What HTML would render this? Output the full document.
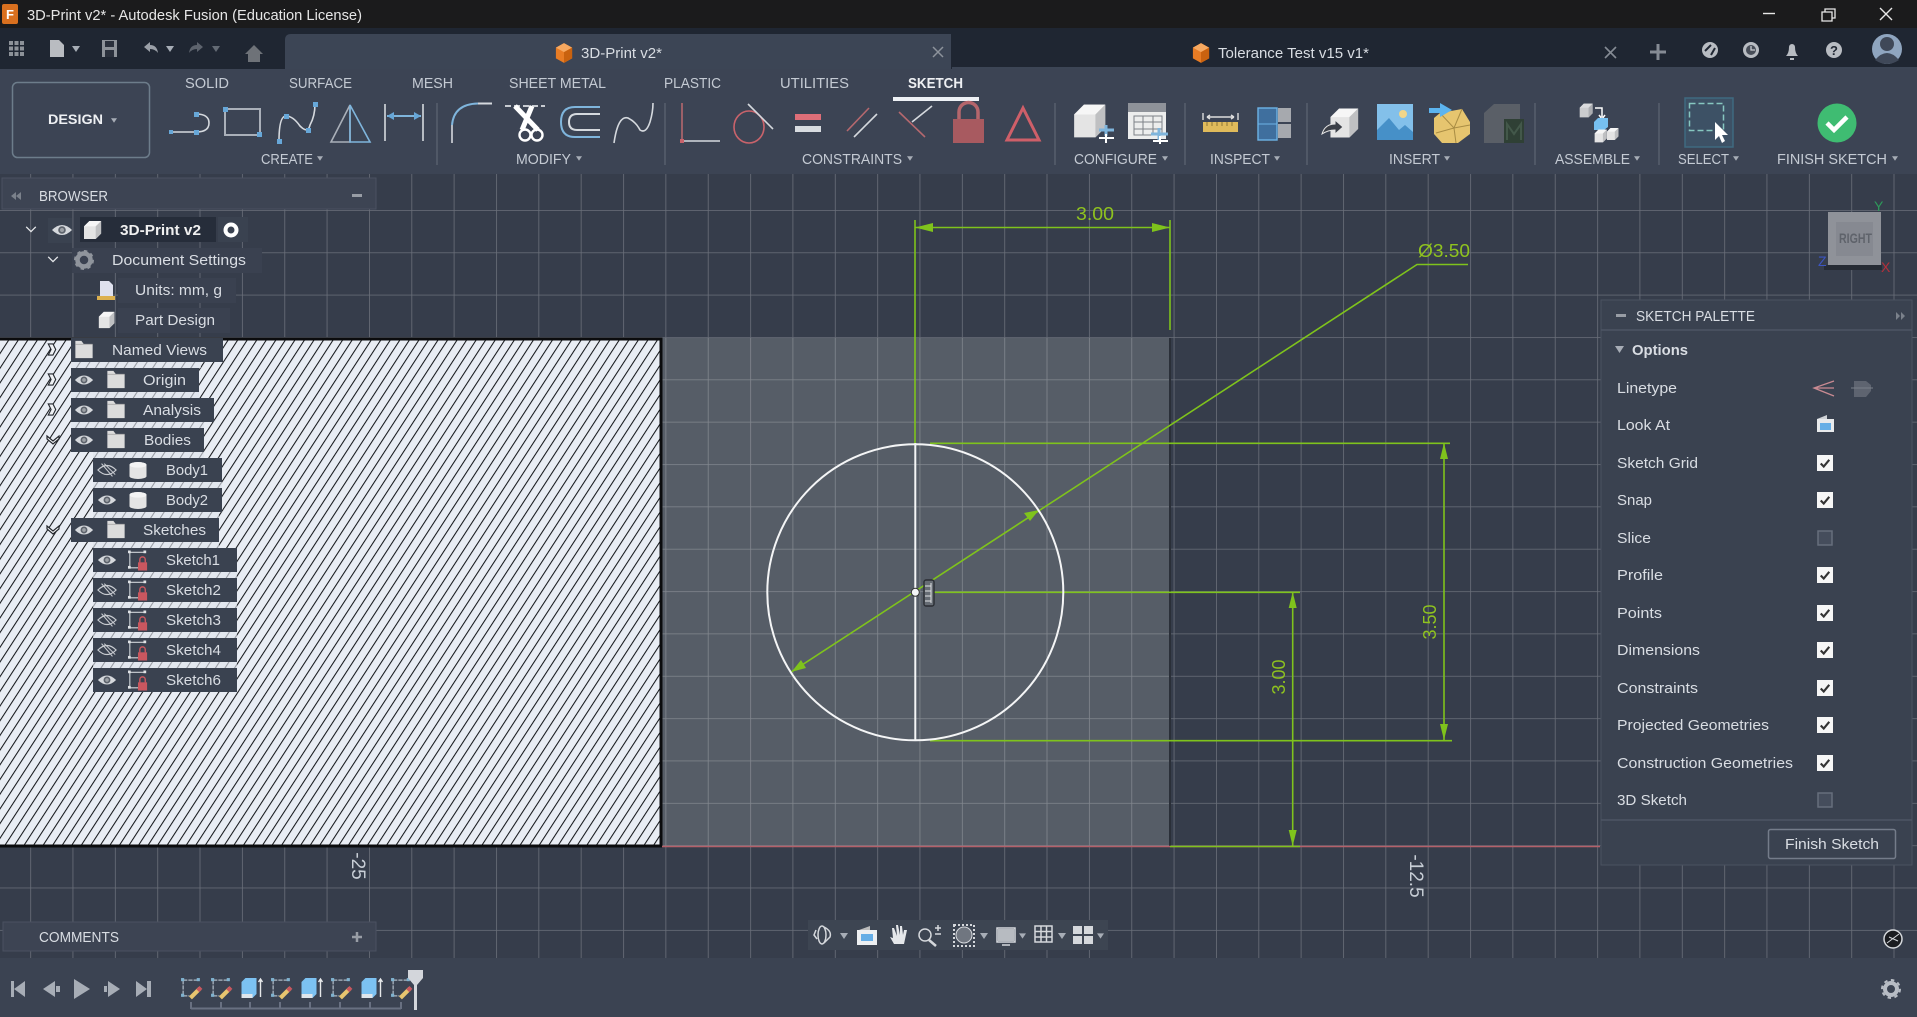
<!DOCTYPE html>
<html><head><meta charset="utf-8"><title>3D-Print v2* - Autodesk Fusion</title>
<style>
html,body{margin:0;padding:0;background:#363d4b;width:1917px;height:1017px;overflow:hidden}
svg{display:block}
text{font-family:"Liberation Sans",sans-serif;fill:#d9dde3}
.m{font-size:14.5px}
.u{font-size:14.5px;fill:#c4cad3}
.b{font-weight:bold;fill:#eef0f3}
.d{font-size:18px;fill:#8fc31f}
</style></head><body>
<svg width="1917" height="1017" viewBox="0 0 1917 1017" xmlns="http://www.w3.org/2000/svg">
<defs>
<pattern id="grid" x="30.2" y="210" width="42.35" height="42.35" patternUnits="userSpaceOnUse">
<path d="M0 0V42.35M0 0H42.35" stroke="#fff" stroke-opacity=".26" stroke-width="1.6" fill="none"/>
</pattern>
<pattern id="hatch" width="8" height="8" patternUnits="userSpaceOnUse" patternTransform="rotate(33)">
<rect width="8" height="8" fill="#e9edf4"/><rect width="1.05" height="8" fill="#15171b"/>
</pattern>
<symbol id="eye" viewBox="0 0 22 14" overflow="visible"><path d="M1 7Q11-3 21 7Q11 17 1 7Z" fill="#d5d8dc"/><circle cx="11" cy="7" r="3.8" fill="#5d636c"/><circle cx="11" cy="7" r="2" fill="#9da1a6"/></symbol>
<symbol id="eyeoff" viewBox="0 0 22 14" overflow="visible"><path d="M1 7Q11-3 21 7Q11 17 1 7Z" fill="none" stroke="#c9ccd1" stroke-width="1.3"/><path d="M5 0L17 14M8 0L20 12" stroke="#c9ccd1" stroke-width="1.1"/></symbol>
<symbol id="folder" viewBox="0 0 22 22" overflow="visible"><path d="M1 1H8L11 5H21V21H1Z" fill="#dcdcdc"/><path d="M1 5H21" stroke="#aaa"/></symbol>
<symbol id="sk" viewBox="0 0 22 22" overflow="visible"><path d="M2 2H19M2 2V19H11" fill="none" stroke="#cfd3d8" stroke-width="1.2"/><g fill="#e0e3e6"><rect x="0" y="0" width="3" height="3"/><rect x="17" y="0" width="3" height="3"/><rect x="0" y="17" width="3" height="3"/></g><rect x="11" y="13" width="10" height="9" fill="#c9575f"/><path d="M13 13V10A3 3 0 0 1 19 10V13" fill="none" stroke="#c9575f" stroke-width="1.6"/></symbol>
<symbol id="chk" viewBox="0 0 15 15"><rect width="15" height="15" fill="#f6f6f6"/><path d="M3.5 8L6.3 10.8L11.5 4.5" fill="none" stroke="#333" stroke-width="2"/></symbol>
<symbol id="cube" viewBox="0 0 20 22" overflow="visible"><path d="M0 7L6 1H19V15L13 21H0Z" fill="#e4e4e4"/><path d="M13 7H0L6 1H19Z" fill="#f6f6f6"/><path d="M13 7L19 1V15L13 21Z" fill="#bfc0c2"/></symbol>
<symbol id="cyl" viewBox="0 0 18 18" overflow="visible"><path d="M0 3A9 3 0 0 1 18 3V15A9 3 0 0 1 0 15Z" fill="#e4e4e4"/><ellipse cx="9" cy="3" rx="9" ry="3" fill="#f4f4f4"/></symbol>
<symbol id="ch" viewBox="0 0 14 10" overflow="visible"><path d="M1 1L7 7L13 1" fill="none" stroke="#e5e7ea" stroke-width="1.6"/></symbol>
<symbol id="chd" viewBox="0 0 14 10" overflow="visible"><path d="M1 1L7 6L13 1L13 4L7 9L1 4Z" fill="#eef0f3" stroke="#23262c" stroke-width="1.2"/></symbol>
<symbol id="ch2" viewBox="0 0 10 14" overflow="visible"><path d="M1 1L6 1L9 7L6 13L1 13L4 7Z" fill="#eef0f3" stroke="#23262c" stroke-width="1.2"/></symbol>
<symbol id="ar" viewBox="0 0 8 6"><path d="M0 0H8L4 6Z" fill="#a7adb6"/></symbol>
<symbol id="orange" viewBox="0 0 20 22"><path d="M10 0L19 5V17L10 22L1 17V5Z" fill="#e87c24"/><path d="M1 5L10 10L19 5L10 0Z" fill="#f6a860"/><path d="M10 10L19 5V17L10 22Z" fill="#c9620f"/></symbol>
<symbol id="skt" viewBox="0 0 22 22" overflow="visible"><path d="M3 3H18M3 3V18H9" fill="none" stroke="#aeb9c4" stroke-width="1.2" stroke-dasharray="4 1"/><g fill="#7fb2cf"><rect x="1" y="1" width="3" height="3"/><rect x="16" y="1" width="3" height="3"/><rect x="1" y="16" width="3" height="3"/></g><path d="M10 20L19 11" stroke="#e7c56f" stroke-width="4"/><path d="M17 13L20 10" stroke="#c9575f" stroke-width="4"/></symbol>
<symbol id="blu" viewBox="0 0 22 22" overflow="visible"><path d="M1 5L5 1H16V17L12 21H1Z" fill="#7cc2f2"/><path d="M1 17H12V21H1Z" fill="#dfe6ec"/><path d="M20 20V3M18 5L20 2L22 5" fill="none" stroke="#e6e8ea" stroke-width="1.4"/></symbol>
</defs>

<!-- canvas -->
<rect width="1917" height="1017" fill="#363d4b"/>
<rect x="662" y="338" width="508" height="509" fill="#565d67"/>
<rect x="0" y="174" width="1917" height="784" fill="url(#grid)"/>
<rect x="0" y="338" width="662" height="509" fill="url(#hatch)"/>
<path d="M-2 339H661V846H-2" fill="none" stroke="#0b0c0e" stroke-width="3"/>
<path d="M1170 338V847" stroke="#2a2f38" stroke-width="2"/>
<path d="M662 846.5H1600" stroke="#b5606a" stroke-width="1.4"/>

<!-- sketch dims -->
<g stroke="#7fc31c" stroke-width="1.6" fill="none">
<path d="M915 220V443M1170 220V330M915 227.5H1170"/>
<path d="M930 443.3H1450M930 592.3H1300M930 740.7H1452M1170 846.5H1300"/>
<path d="M1444 443V740M1292.7 592V846"/>
<path d="M791.7 671.7L1417 264.5H1468"/>
</g>
<g fill="#7fc31c">
<path d="M915 227.5L933 223V232ZM1170 227.5L1152 223V232Z"/>
<path d="M1444 443L1440 459H1448ZM1444 740L1440 724H1448ZM1292.7 592L1288.7 608H1296.7ZM1292.7 846L1288.7 830H1296.7Z"/>
<path d="M1039 510L1024 513L1030 521ZM791.7 671.7L806 668L801 660Z"/>
</g>
<text class="d" x="1076" y="220" textLength="38" lengthAdjust="spacingAndGlyphs">3.00</text>
<text class="d" x="1418" y="257" textLength="52" lengthAdjust="spacingAndGlyphs">Ø3.50</text>
<text class="d" transform="translate(1436,622) rotate(-90)" text-anchor="middle">3.50</text>
<text class="d" transform="translate(1285,677) rotate(-90)" text-anchor="middle">3.00</text>
<text transform="translate(1410,876) rotate(90)" text-anchor="middle" style="font-size:19px;fill:#c8ced6">-12.5</text>
<text transform="translate(352,866) rotate(90)" text-anchor="middle" style="font-size:19px;fill:#c8ced6">-25</text>
<circle cx="915.3" cy="592.3" r="148" fill="none" stroke="#f4f5f6" stroke-width="2"/>
<path d="M915.3 443V740" stroke="#f4f5f6" stroke-width="2"/>
<circle cx="915.3" cy="592.3" r="4" fill="#f4f5f6" stroke="#333" stroke-width="1"/>
<rect x="924" y="580" width="10" height="26" rx="2" fill="#666c74" stroke="#2a2d33" stroke-width="1.4"/>
<path d="M931 583V603M925 586H931M925 591H931M925 596H931M925 601H931" stroke="#e0e2e4" stroke-width="1"/>

<!-- view cube -->
<rect x="1828" y="212" width="53" height="53" fill="#8f9299"/>
<rect x="1836" y="222" width="37" height="34" fill="#868991"/>
<rect x="1824" y="265" width="58" height="5" fill="#262b34"/>
<text x="1839" y="243" textLength="33" lengthAdjust="spacingAndGlyphs" style="font-size:14px;fill:#5f636b;font-weight:bold">RIGHT</text>
<text x="1874" y="211" style="font-size:14px;fill:#2e9a5a">Y</text>
<text x="1818" y="266" style="font-size:14px;fill:#3c55c0">Z</text>
<text x="1881" y="272" style="font-size:14px;fill:#b5303a">X</text>

<!-- title bar -->
<rect width="1917" height="28" fill="#1b1b1c"/>
<rect x="2" y="4" width="16" height="20" rx="2" fill="#d9701f"/><text x="6" y="19" style="font-size:13px;fill:#fff;font-weight:bold">F</text>
<text x="27" y="20" textLength="335" lengthAdjust="spacingAndGlyphs" style="font-size:15px;fill:#e6e6e6">3D-Print v2* - Autodesk Fusion (Education License)</text>
<path d="M1763 13.5H1775" stroke="#e8e8e8" stroke-width="1.4"/>
<path d="M1822 12H1832V21H1822ZM1825 12V9H1835V18H1832" fill="none" stroke="#e8e8e8" stroke-width="1.3"/>
<path d="M1880 8L1892 20M1892 8L1880 20" stroke="#e8e8e8" stroke-width="1.4"/>

<!-- tab row -->
<rect y="28" width="1917" height="41" fill="#1f2632"/>
<path d="M285 69V40Q285 34 291 34H951V69Z" fill="#3c4555"/>
<path d="M952 68H1917" stroke="#3c4555" stroke-width="2"/>
<g fill="#8d9299">
<path d="M9 41h4v4h-4zM14.500 41h4v4h-4zM20 41h4v4h-4zM9 46.500h4v4h-4zM14.500 46.500h4v4h-4zM20 46.500h4v4h-4zM9 52h4v4h-4zM14.500 52h4v4h-4zM20 52h4v4h-4z"/>
</g>
<path d="M50 40H59L64 45V57H50Z" fill="#b9bcc1"/>
<use href="#ar" x="72" y="46" width="8" height="6"/>
<path d="M102 40H117V57H102Z" fill="#8d9299"/><rect x="105" y="41" width="9" height="6" fill="#2a303c"/><rect x="105" y="50" width="9" height="7" fill="#2a303c"/>
<path d="M144 47L150 42V45Q157 45 158 53Q155 49 150 49V52Z" fill="#9a9fa7"/>
<use href="#ar" x="166" y="46" width="8" height="6"/>
<path d="M203 47L197 42V45Q190 45 189 53Q192 49 197 49V52Z" fill="#5d636d"/>
<use href="#ar" x="212" y="46" width="8" height="6" opacity=".5"/>
<path d="M245 54L254 45L263 54H260V62H248V54Z" fill="#6e7278"/>
<use href="#orange" x="555" y="43" width="18" height="20"/>
<text x="581" y="58" textLength="81" lengthAdjust="spacingAndGlyphs" style="font-size:15px">3D-Print v2*</text>
<path d="M933 47L943 57M943 47L933 57" stroke="#8d939c" stroke-width="1.5"/>
<use href="#orange" x="1192" y="43" width="18" height="20"/>
<text x="1218" y="58" textLength="151" lengthAdjust="spacingAndGlyphs" style="font-size:15px">Tolerance Test v15 v1*</text>
<path d="M1605 47L1616 58M1616 47L1605 58" stroke="#858b94" stroke-width="1.6"/>
<path d="M1658 44V60M1650 52H1666" stroke="#858b94" stroke-width="3"/>
<circle cx="1710" cy="50" r="8" fill="#b8bcc2"/><path d="M1705 51L1711 45M1711 55L1715 48" stroke="#1f2632" stroke-width="2"/>
<circle cx="1751" cy="50" r="8" fill="#b8bcc2"/><circle cx="1751" cy="50" r="5" fill="#474d58"/><path d="M1751 46V50H1755" stroke="#c8cbd0" fill="none" stroke-width="1.3"/>
<path d="M1786 56Q1789 53 1789 47A3 3 0 0 1 1795 47Q1795 53 1798 56ZM1790 58H1794V60H1790Z" fill="#b8bcc2"/>
<circle cx="1834" cy="50" r="8" fill="#b8bcc2"/><text x="1830" y="55" style="font-size:13px;fill:#1f2632;font-weight:bold">?</text>
<ellipse cx="1887" cy="49" rx="15" ry="15" fill="#8fa5bf"/><circle cx="1887" cy="44" r="7" fill="#3f4858"/><path d="M1875 60Q1887 46 1899 60Q1887 68 1875 60Z" fill="#3f4858"/>

<!-- toolbar -->
<rect y="69" width="1917" height="105" fill="#3c4454"/>
<rect x="12.500" y="82.500" width="137" height="75" rx="5" fill="none" stroke="#6d7d8b" stroke-width="1.5"/>
<text x="48" y="124" textLength="55" lengthAdjust="spacingAndGlyphs" class="b" style="font-size:14px">DESIGN</text>
<use href="#ar" x="111" y="118" width="6" height="5"/>
<text class="u" x="185" y="88" textLength="44" lengthAdjust="spacingAndGlyphs">SOLID</text>
<text class="u" x="289" y="88" textLength="63" lengthAdjust="spacingAndGlyphs">SURFACE</text>
<text class="u" x="412" y="88" textLength="41" lengthAdjust="spacingAndGlyphs">MESH</text>
<text class="u" x="509" y="88" textLength="97" lengthAdjust="spacingAndGlyphs">SHEET METAL</text>
<text class="u" x="664" y="88" textLength="57" lengthAdjust="spacingAndGlyphs">PLASTIC</text>
<text class="u" x="780" y="88" textLength="69" lengthAdjust="spacingAndGlyphs">UTILITIES</text>
<text x="908" y="88" textLength="55" lengthAdjust="spacingAndGlyphs" class="b" style="font-size:14.5px">SKETCH</text>
<rect x="893" y="97" width="86" height="4" fill="#eef1f5"/>
<text class="u" x="261" y="164" textLength="52" lengthAdjust="spacingAndGlyphs">CREATE</text><use href="#ar" x="317" y="156" width="6" height="5"/>
<text class="u" x="516" y="164" textLength="55" lengthAdjust="spacingAndGlyphs">MODIFY</text><use href="#ar" x="576" y="156" width="6" height="5"/>
<text class="u" x="802" y="164" textLength="100" lengthAdjust="spacingAndGlyphs">CONSTRAINTS</text><use href="#ar" x="907" y="156" width="6" height="5"/>
<text class="u" x="1074" y="164" textLength="83" lengthAdjust="spacingAndGlyphs">CONFIGURE</text><use href="#ar" x="1162" y="156" width="6" height="5"/>
<text class="u" x="1210" y="164" textLength="60" lengthAdjust="spacingAndGlyphs">INSPECT</text><use href="#ar" x="1274" y="156" width="6" height="5"/>
<text class="u" x="1389" y="164" textLength="51" lengthAdjust="spacingAndGlyphs">INSERT</text><use href="#ar" x="1444" y="156" width="6" height="5"/>
<text class="u" x="1555" y="164" textLength="75" lengthAdjust="spacingAndGlyphs">ASSEMBLE</text><use href="#ar" x="1634" y="156" width="6" height="5"/>
<text class="u" x="1678" y="164" textLength="51" lengthAdjust="spacingAndGlyphs">SELECT</text><use href="#ar" x="1733" y="156" width="6" height="5"/>
<text class="u" x="1777" y="164" textLength="110" lengthAdjust="spacingAndGlyphs">FINISH SKETCH</text><use href="#ar" x="1892" y="156" width="6" height="5"/>
<path d="M437 103V165M665 103V165M1055 103V165M1185 103V165M1307 103V165M1535 103V165M1659 103V165" stroke="#59616f" stroke-width="1.4"/>

<!-- create icons -->
<g fill="none" stroke-width="1.6">
<path d="M171 132H196" stroke="#d5d9de"/><path d="M196 114Q209 114 209 123Q209 132 196 132" stroke="#d5d9de"/>
<path d="M225 109H260V135H225Z" stroke="#aab0b9" stroke-width="2"/>
<path d="M279 141Q279 116 286 116Q293 116 300 126Q308 134 310 125Q315 116 315 104" stroke="#d5d9de"/>
<path d="M350 105L331 142H350Z" stroke="#aab0b9"/><path d="M350 105L370 142H350Z" stroke="#7fb5dc"/>
<path d="M385 104V141M423 104V141" stroke="#d5d9de"/><path d="M387 116H421" stroke="#7fb5dc" stroke-width="2"/>
<path d="M452 143V125" stroke="#d5d9de"/><path d="M452 125Q454 104 478 103.500" stroke="#7fb5dc" stroke-width="2"/><path d="M478 103.500H492" stroke="#d5d9de" stroke-width="2"/>
<path d="M505 106H545" stroke="#c7cbd1" stroke-dasharray="6 3" stroke-width="2"/>
<path d="M600 107H575Q561 107 561 122Q561 137 575 137H600" stroke="#7fb5dc" stroke-width="2"/><path d="M600 114H577Q569 114 569 122Q569 130 577 130H600" stroke="#d5d9de" stroke-width="2"/>
<path d="M614 143Q618 115 628 118Q636 122 640 130Q646 134 650 122Q653 112 653 103" stroke="#d5d9de"/>
</g>
<path d="M515 106L538 130M532 106L522 130" stroke="#fff" stroke-width="5" fill="none"/>
<circle cx="525" cy="135" r="5.500" fill="none" stroke="#fff" stroke-width="2.400"/><circle cx="537" cy="135" r="5.500" fill="none" stroke="#fff" stroke-width="2.400"/>
<g fill="#67a7d8"><rect x="169" y="130" width="4" height="4"/><rect x="194" y="112" width="5" height="5"/><rect x="194" y="130" width="5" height="5"/><rect x="223" y="107" width="5" height="5"/><rect x="257" y="132" width="5" height="5"/><rect x="277" y="139" width="5" height="5"/><rect x="284" y="114" width="5" height="5"/><rect x="306" y="128" width="5" height="5"/><rect x="313" y="102" width="5" height="5"/><path d="M387 116L394 112V120ZM421 116L414 112V120Z"/></g>

<!-- constraints icons -->
<g fill="none" stroke-width="1.6">
<path d="M682 103V141" stroke="#b5686e"/><path d="M684 141H720" stroke="#d5d9de"/>
<ellipse cx="749" cy="127" rx="15" ry="16" stroke="#c9636b"/><path d="M748 104L773 129" stroke="#d5d9de"/>
<path d="M847 131L869 108" stroke="#b5686e"/><path d="M854 137L877 114" stroke="#d5d9de"/>
<path d="M899 112L925 137" stroke="#b5686e"/><path d="M912 122L932 106" stroke="#d5d9de"/>
<path d="M1023 108L1039 140H1007Z" stroke="#cf5f69" stroke-width="3"/>
<path d="M959 120V112A9.500 9.500 0 0 1 978 112V120" stroke="#b5666c" stroke-width="3.500"/>
</g>
<rect x="680" y="139" width="4" height="4" fill="#c9636b"/>
<rect x="795" y="114" width="26" height="6" fill="#de6e78"/><rect x="795" y="126" width="26" height="6" fill="#d8dce0"/>
<rect x="953" y="119" width="31" height="24" fill="#a85a60"/>

<!-- configure/inspect -->
<use href="#cube" x="1074" y="103" width="33" height="36"/>
<path d="M1099 130H1114M1106 125V136" stroke="#7fb5dc" stroke-width="3"/><path d="M1099 138H1114M1106 134V143" stroke="#fff" stroke-width="2"/>
<rect x="1128" y="103" width="38" height="36" fill="#eceded"/><rect x="1128" y="103" width="38" height="9" fill="#8e9299"/>
<path d="M1134 116H1162V135H1134ZM1134 122H1162M1134 129H1162M1143 116V135M1153 116V135" stroke="#7d8188" fill="none"/>
<path d="M1151 134H1168M1159 128V140" stroke="#7fb5dc" stroke-width="3"/><path d="M1153 141H1168M1160 136V144" stroke="#fff" stroke-width="2"/>
<rect x="1203" y="122" width="35" height="10" fill="#e0bb5b"/><path d="M1207 117H1234M1203 113V120M1238 113V120M1207 117L1210 115M1207 117L1210 119M1234 117L1231 115M1234 117L1231 119" stroke="#ddd" fill="none" stroke-width="1.400"/><path d="M1207 122V126M1212 122V126M1217 122V126M1222 122V126M1227 122V126M1232 122V126" stroke="#8d7434"/>
<rect x="1258" y="108" width="19" height="32" fill="#3f6f9e" stroke="#6db3e6" stroke-width="1.400"/><path d="M1278 108H1291V122H1278ZM1278 124H1291V138H1278Z" fill="#a6a9ae"/><path d="M1258 124H1277" stroke="#6db3e6"/>

<!-- insert -->
<use href="#cube" x="1330" y="107" width="30" height="32"/>
<path d="M1322 134Q1325 124 1335 124V120L1343 127L1335 134V130Q1328 130 1322 134Z" fill="#3b3f47" stroke="#e4e4e4"/>
<rect x="1377" y="104" width="36" height="36" fill="#83c0ea"/><circle cx="1403" cy="114" r="4" fill="#f2d68a"/><path d="M1377 140V130L1389 118L1399 130L1405 125L1413 132V140Z" fill="#4690c8"/>
<path d="M1440 113L1462 109L1470 122V134L1458 143H1442L1434 134V118Z" fill="#e6c56f"/><path d="M1440 113L1454 128L1436 133M1454 128L1462 109M1454 128L1470 125M1454 128L1456 143" stroke="#a98d44" fill="none"/>
<path d="M1429 108H1440V103L1452 110L1440 117V113H1429Z" fill="#5cb4ef"/>
<path d="M1484 113L1494 104H1520V143H1484Z" fill="#5a5f67"/><rect x="1504" y="119" width="20" height="24" fill="#2f4035"/><path d="M1507 140V124L1514 134L1521 124V140" stroke="#43584a" fill="none" stroke-width="2"/>

<!-- assemble -->
<use href="#cube" x="1579" y="103" width="15" height="15" opacity=".85"/>
<path d="M1595 108H1602V117M1599 115L1602 119L1605 115" stroke="#fff" fill="none" stroke-width="1.500"/>
<path d="M1594 122L1598 118H1608V127L1604 130H1594Z" fill="#77c0f0"/>
<use href="#cube" x="1594" y="129" width="14" height="14"/><use href="#cube" x="1607" y="126" width="12" height="16"/>

<!-- select -->
<rect x="1685" y="98" width="48" height="49" fill="#3d5165" stroke="#3f6a80" stroke-width="1.500"/>
<rect x="1689.500" y="103.500" width="34" height="27" fill="none" stroke="#86c7c0" stroke-width="1.500" stroke-dasharray="6 3"/>
<path d="M1715 122V140L1719 136L1722 143L1725 141L1722 135H1728Z" fill="#fff"/>
<circle cx="1837" cy="123" r="19.500" fill="#3fbc72"/><path d="M1827 123L1834 130L1847 117" fill="none" stroke="#fff" stroke-width="4.500"/>

<!-- browser panel -->
<rect x="2" y="178" width="374" height="31" fill="#3d4453" stroke="#4a5160"/>
<path d="M16 192L11 196L16 200ZM21 192L16 196L21 200Z" fill="#7b818b"/>
<text x="39" y="201" textLength="69" lengthAdjust="spacingAndGlyphs" style="font-size:14.500px">BROWSER</text>
<rect x="352" y="194" width="10" height="3" fill="#989da5"/>

<!-- browser rows -->
<path d="M71 362h130v6h-130zM71 392h128v6h-128zM71 422h133v6h-133zM93 452h111v6h-111zM93 482h129v6h-129zM93 512h126v6h-126zM93 542h126v6h-126zM93 572h144v6h-144zM93 602h144v6h-144zM93 632h144v6h-144zM93 662h144v6h-144z" fill="#dfe3ec" opacity=".65"/>
<use href="#ch" x="25" y="226" width="12" height="8"/>
<rect x="48" y="218" width="24" height="25" fill="#3a4250"/><use href="#eye" x="51" y="223" width="22" height="14"/>
<rect x="80" y="217" width="136" height="25" fill="#262d3a"/><use href="#cube" x="84" y="220" width="18" height="20"/>
<text x="120" y="235" textLength="81" lengthAdjust="spacingAndGlyphs" style="font-size:15px;font-weight:bold;fill:#f0f0f0">3D-Print v2</text>
<rect x="218" y="217" width="30" height="25" fill="#3a4250"/><circle cx="231" cy="230" r="5.500" fill="none" stroke="#fff" stroke-width="4"/>

<use href="#ch" x="47" y="256" width="12" height="8"/>
<rect x="72" y="248" width="190" height="25" fill="#3a4150"/>
<circle cx="84" cy="260" r="6.500" fill="none" stroke="#8f949c" stroke-width="4.500"/><circle cx="84" cy="260" r="9" fill="none" stroke="#8f949c" stroke-width="2" stroke-dasharray="3.500 3.500"/>
<text class="m" x="112" y="265" textLength="134" lengthAdjust="spacingAndGlyphs">Document Settings</text>

<rect x="118" y="278" width="118" height="25" fill="#3a4150"/>
<path d="M100 281H109L113 285V296H100Z" fill="#dfe1ee"/><rect x="97" y="296" width="18" height="4" fill="#dcb04f"/>
<text class="m" x="135" y="295" textLength="87" lengthAdjust="spacingAndGlyphs">Units: mm, g</text>

<rect x="118" y="308" width="112" height="25" fill="#3a4150"/>
<use href="#cube" x="98" y="311" width="18" height="18"/>
<text class="m" x="135" y="325" textLength="80" lengthAdjust="spacingAndGlyphs">Part Design</text>

<use href="#ch2" x="47" y="343" width="10" height="13"/>
<rect x="71" y="338" width="152" height="24" fill="#3a4250"/><use href="#folder" x="74" y="340" width="20" height="19"/>
<text class="m" x="112" y="355" textLength="95" lengthAdjust="spacingAndGlyphs">Named Views</text>

<use href="#ch2" x="47" y="373" width="10" height="13"/>
<rect x="71" y="368" width="128" height="24" fill="#3a4250"/><use href="#eye" x="74" y="373" width="20" height="14"/><use href="#folder" x="106" y="370" width="20" height="19"/>
<text class="m" x="143" y="385" textLength="43" lengthAdjust="spacingAndGlyphs">Origin</text>

<use href="#ch2" x="47" y="403" width="10" height="13"/>
<rect x="71" y="398" width="143" height="24" fill="#3a4250"/><use href="#eye" x="74" y="403" width="20" height="14"/><use href="#folder" x="106" y="400" width="20" height="19"/>
<text class="m" x="143" y="415" textLength="58" lengthAdjust="spacingAndGlyphs">Analysis</text>

<use href="#chd" x="46" y="435" width="14" height="10"/>
<rect x="71" y="428" width="133" height="24" fill="#3a4250"/><use href="#eye" x="74" y="433" width="20" height="14"/><use href="#folder" x="106" y="430" width="20" height="19"/>
<text class="m" x="144" y="445" textLength="47" lengthAdjust="spacingAndGlyphs">Bodies</text>

<rect x="93" y="458" width="129" height="24" fill="#3a4250"/><use href="#eyeoff" x="97" y="463" width="20" height="14"/><use href="#cyl" x="129" y="462" width="18" height="17"/>
<text class="m" x="166" y="475" textLength="42" lengthAdjust="spacingAndGlyphs">Body1</text>

<rect x="93" y="488" width="129" height="24" fill="#3a4250"/><use href="#eye" x="97" y="493" width="20" height="14"/><use href="#cyl" x="129" y="492" width="18" height="17"/>
<text class="m" x="166" y="505" textLength="42" lengthAdjust="spacingAndGlyphs">Body2</text>

<use href="#chd" x="46" y="525" width="14" height="10"/>
<rect x="71" y="518" width="148" height="24" fill="#3a4250"/><use href="#eye" x="74" y="523" width="20" height="14"/><use href="#folder" x="106" y="520" width="20" height="19"/>
<text class="m" x="143" y="535" textLength="63" lengthAdjust="spacingAndGlyphs">Sketches</text>

<rect x="93" y="548" width="144" height="24" fill="#3a4250"/><use href="#eye" x="97" y="553" width="20" height="14"/><use href="#sk" x="128" y="550" width="20" height="21"/>
<text class="m" x="166" y="565" textLength="54" lengthAdjust="spacingAndGlyphs">Sketch1</text>

<rect x="93" y="578" width="144" height="24" fill="#3a4250"/><use href="#eyeoff" x="97" y="583" width="20" height="14"/><use href="#sk" x="128" y="580" width="20" height="21"/>
<text class="m" x="166" y="595" textLength="55" lengthAdjust="spacingAndGlyphs">Sketch2</text>

<rect x="93" y="608" width="144" height="24" fill="#3a4250"/><use href="#eyeoff" x="97" y="613" width="20" height="14"/><use href="#sk" x="128" y="610" width="20" height="21"/>
<text class="m" x="166" y="625" textLength="55" lengthAdjust="spacingAndGlyphs">Sketch3</text>

<rect x="93" y="638" width="144" height="24" fill="#3a4250"/><use href="#eyeoff" x="97" y="643" width="20" height="14"/><use href="#sk" x="128" y="640" width="20" height="21"/>
<text class="m" x="166" y="655" textLength="55" lengthAdjust="spacingAndGlyphs">Sketch4</text>

<rect x="93" y="668" width="144" height="24" fill="#3a4250"/><use href="#eye" x="97" y="673" width="20" height="14"/><use href="#sk" x="128" y="670" width="20" height="21"/>
<text class="m" x="166" y="685" textLength="55" lengthAdjust="spacingAndGlyphs">Sketch6</text>

<!-- palette -->
<rect x="1601" y="300" width="311" height="565" fill="#3a4250" stroke="#4b5261"/>
<path d="M1601 330H1912M1601 820H1912" stroke="#4d5564" stroke-width="1.500"/>
<rect x="1616" y="314" width="10" height="3" fill="#989da5"/>
<text x="1636" y="321" textLength="119" lengthAdjust="spacingAndGlyphs" style="font-size:14.500px">SKETCH PALETTE</text>
<path d="M1896 312L1900 316L1896 320ZM1901 312L1905 316L1901 320Z" fill="#7b818b"/>
<path d="M1615 346H1624L1619.500 353Z" fill="#a7adb6"/>
<text x="1632" y="355" textLength="56" lengthAdjust="spacingAndGlyphs" style="font-size:14.500px;font-weight:bold">Options</text>
<text class="m" x="1617" y="393" textLength="60" lengthAdjust="spacingAndGlyphs">Linetype</text>
<text class="m" x="1617" y="430" textLength="53" lengthAdjust="spacingAndGlyphs">Look At</text>
<text class="m" x="1617" y="468" textLength="81" lengthAdjust="spacingAndGlyphs">Sketch Grid</text>
<text class="m" x="1617" y="505" textLength="35" lengthAdjust="spacingAndGlyphs">Snap</text>
<text class="m" x="1617" y="543" textLength="34" lengthAdjust="spacingAndGlyphs">Slice</text>
<text class="m" x="1617" y="580" textLength="46" lengthAdjust="spacingAndGlyphs">Profile</text>
<text class="m" x="1617" y="618" textLength="45" lengthAdjust="spacingAndGlyphs">Points</text>
<text class="m" x="1617" y="655" textLength="83" lengthAdjust="spacingAndGlyphs">Dimensions</text>
<text class="m" x="1617" y="693" textLength="81" lengthAdjust="spacingAndGlyphs">Constraints</text>
<text class="m" x="1617" y="730" textLength="152" lengthAdjust="spacingAndGlyphs">Projected Geometries</text>
<text class="m" x="1617" y="768" textLength="176" lengthAdjust="spacingAndGlyphs">Construction Geometries</text>
<text class="m" x="1617" y="805" textLength="70" lengthAdjust="spacingAndGlyphs">3D Sketch</text>
<path d="M1834 381L1814 388L1834 396M1814 388H1834" fill="none" stroke="#c98a92" stroke-width="1.300"/>
<path d="M1854 381H1866L1871 385V391L1866 397H1854Z" fill="#5e6470"/><path d="M1851 388H1873" stroke="#7a808a"/>
<rect x="1817" y="419" width="17" height="13" fill="#e8eaec"/><rect x="1820" y="423" width="11" height="7" fill="#66aee6"/><path d="M1817 419L1827 415V419" fill="#cfd2d6"/>
<use href="#chk" x="1817" y="455" width="16" height="16"/>
<use href="#chk" x="1817" y="492" width="16" height="16"/>
<rect x="1818" y="531" width="14" height="14" fill="#454d5c" stroke="#666e7c" stroke-width="1.500"/>
<use href="#chk" x="1817" y="567" width="16" height="16"/>
<use href="#chk" x="1817" y="605" width="16" height="16"/>
<use href="#chk" x="1817" y="642" width="16" height="16"/>
<use href="#chk" x="1817" y="680" width="16" height="16"/>
<use href="#chk" x="1817" y="717" width="16" height="16"/>
<use href="#chk" x="1817" y="755" width="16" height="16"/>
<rect x="1818" y="793" width="14" height="14" fill="#454d5c" stroke="#666e7c" stroke-width="1.500"/>
<rect x="1768.500" y="829.500" width="127" height="29" rx="2" fill="#3a4250" stroke="#747c8a" stroke-width="1.500"/>
<text class="m" x="1785" y="849" textLength="94" lengthAdjust="spacingAndGlyphs">Finish Sketch</text>

<!-- comments -->
<rect x="3" y="922" width="373" height="29" fill="#3d4453" stroke="#4a5160"/>
<text x="39" y="942" textLength="80" lengthAdjust="spacingAndGlyphs" style="font-size:14.500px">COMMENTS</text>
<path d="M357 932V942M352 937H362" stroke="#989da5" stroke-width="2.500"/>

<!-- nav bar -->
<rect x="808" y="920" width="300" height="30" fill="#3d4552"/>
<g fill="none" stroke="#d5d8dc" stroke-width="1.500">
<ellipse cx="822" cy="935" rx="4" ry="9"/><path d="M816 930L814 935L817 939M824 927Q832 931 830 937L824 943"/>
<circle cx="925" cy="935" r="6"/><path d="M929 940L936 946" stroke-width="2.500"/><path d="M935 928H941M938 925V931M935 934H941"/>
<path d="M954 925H974V946H954Z" stroke-dasharray="2 2" stroke-width="2"/>
<rect x="997" y="928" width="18" height="14"/><path d="M1002 945H1010"/>
<path d="M1035 926H1052V942H1035ZM1035 931.500H1052M1035 937H1052M1041 926V942M1046.500 926V942"/>
</g>
<path d="M857 930H877V945H857Z" fill="#eef0f2"/><rect x="861" y="934" width="12" height="7" fill="#66aee6"/><path d="M859 930L870 926V930Z" fill="#bbb"/>
<path d="M890 937L894 944H904L907 930L904 930L903 935L902 926H900V935L898 925H896L897 936L894 928H892L893 938Z" fill="#e5e7ea"/>
<circle cx="964" cy="935" r="8" fill="#707680" stroke="#d5d8dc"/>
<rect x="998" y="929" width="16" height="12" fill="#b7bbc1"/>
<path d="M1073 926H1082V934H1073ZM1084 926H1093V934H1084ZM1073 936H1082V944H1073ZM1084 936H1093V944H1084Z" fill="#d5d8dc"/>
<use href="#ar" x="840" y="933" width="8" height="6"/><use href="#ar" x="980" y="933" width="8" height="6"/><use href="#ar" x="1019" y="933" width="7" height="6"/><use href="#ar" x="1058" y="933" width="8" height="6"/><use href="#ar" x="1097" y="933" width="7" height="6"/>

<circle cx="1893" cy="939" r="9" fill="#1a1c20" stroke="#d5d8dc" stroke-width="1.500"/><path d="M1887 943L1899 934M1889 937L1898 941" stroke="#d5d8dc"/>

<!-- timeline -->
<rect y="958" width="1917" height="59" fill="#3b4352"/>
<g fill="#a7adb6">
<path d="M11 981H14V997H11ZM25 981V997L14 989Z"/>
<path d="M43 989L55 981V997ZM56 986H60V992H56Z"/>
<path d="M74 979L90 989L74 999Z"/>
<path d="M108 981L120 989L108 997ZM104 986H107V992H104Z"/>
<path d="M136 981L147 989L136 997ZM147 981H151V997H147Z"/>
</g>
<circle cx="1891" cy="989" r="6" fill="none" stroke="#b7bcc4" stroke-width="4"/><circle cx="1891" cy="989" r="9" fill="none" stroke="#b7bcc4" stroke-width="2" stroke-dasharray="3.500 3.500"/>
<use href="#skt" x="180" y="977" width="23" height="23"/><use href="#skt" x="210" y="977" width="23" height="23"/>
<use href="#blu" x="240" y="977" width="23" height="22"/>
<use href="#skt" x="270" y="977" width="23" height="23"/>
<use href="#blu" x="300" y="977" width="23" height="22"/>
<use href="#skt" x="330" y="977" width="23" height="23"/>
<use href="#blu" x="360" y="977" width="23" height="22"/>
<use href="#skt" x="390" y="977" width="23" height="23"/>
<path d="M191 1008.500H401M191 1002V1009M221 1002V1009M250 1002V1009M280 1002V1009M310 1002V1009M340 1002V1009M370 1002V1009M401 1002V1009" stroke="#687081" stroke-width="2" fill="none"/>
<path d="M408 970H423V978L417 985V1010H414V985L408 978Z" fill="#d3d6db"/>
</svg>
</body></html>
